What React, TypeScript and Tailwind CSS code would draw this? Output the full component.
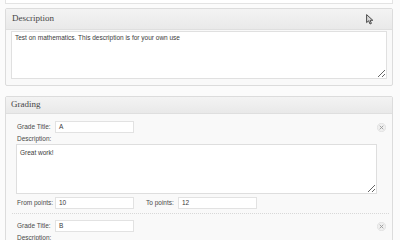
import React from "react";

const sans = { fontFamily: '"Liberation Sans", Arial, sans-serif' };
const serif = { fontFamily: '"Liberation Serif", "Times New Roman", serif' };

function XIcon() {
  return (
    <svg width="9" height="9" viewBox="0 0 9 9" className="block">
      <circle cx="4.5" cy="4.5" r="4.2" fill="#efefef" stroke="#dadada" strokeWidth="0.6" />
      <path d="M3 3 L6 6 M6 3 L3 6" stroke="#9a9a9a" strokeWidth="0.9" strokeLinecap="round" />
    </svg>
  );
}

function Cursor() {
  return (
    <svg width="8" height="11" viewBox="0 0 8 11" className="block">
      <path d="M0.6 0.6 L0.6 8.6 L2.6 6.8 L4 10 L5.4 9.4 L4.1 6.3 L6.8 6.3 Z" fill="#d8d8d8" stroke="#3a3a3a" strokeWidth="0.9" strokeLinejoin="round" />
    </svg>
  );
}

function Field({ label, value, labelW }: { label: string; value: string; labelW: string }) {
  return (
    <div className="flex items-center">
      <div className={`${labelW} text-[6.5px] text-[#4a4a4a]`}>{label}</div>
      <div className="w-[79px] h-[12px] border border-[#e2e2e2] bg-white flex items-center pl-[3px] text-[6.5px] text-[#3a3a3a]">
        {value}
      </div>
    </div>
  );
}

function GradeItem({ title, desc, from, to, last }: { title: string; desc: string; from?: string; to?: string; last?: boolean }) {
  return (
    <div className="relative">
      <div className="absolute right-[0px] top-[2px]">
        <XIcon />
      </div>
      <Field label="Grade Title:" value={title} labelW="w-[38px]" />
      <div className="text-[6.5px] text-[#4a4a4a] mt-[2px] leading-[8px]">Description:</div>
      {!last && (
        <>
          <textarea
            readOnly
            defaultValue={desc}
            className="mt-[1px] -ml-px block w-[361px] h-[50px] border border-[#dedede] bg-white px-[3px] py-[4px] text-[6.5px] text-[#3a3a3a] leading-[8px] outline-none"
            style={sans}
          />
          <div className="flex items-center mt-[3px]">
            <Field label="From points:" value={from || ""} labelW="w-[38px]" />
            <div className="ml-[12px]">
              <Field label="To points:" value={to || ""} labelW="w-[32px]" />
            </div>
          </div>
          <div className="mt-[4px] mb-[6px] -ml-[5px] mr-[-3px] border-b border-dotted border-[#d8d8d8]" />
        </>
      )}
    </div>
  );
}

export default function App() {
  return (
    <div className="w-[400px] h-[240px] overflow-hidden bg-[#fbfbfb] pl-[5px] pr-[7px]" style={sans}>
      <div className="h-[4px] border-x border-b border-[#e3e3e3] bg-white" />
      <div className="mt-[4px] border border-[#dcdcdc] bg-[#f9f9f9] rounded-[2px]">
        <div className="h-[21px] flex items-center justify-between pl-[6px] pr-[18px] bg-gradient-to-b from-[#f3f3f3] to-[#e9e9e9] border-b border-[#dfdfdf]">
          <span className="text-[9px] text-[#464646]" style={serif}>Description</span>
          <Cursor />
        </div>
        <div className="px-[5px] pt-[1px] pb-[6px]">
          <textarea
            readOnly
            defaultValue="Test on mathematics. This description is for your own use"
            className="block w-full h-[48px] border border-[#e0e0e0] bg-white px-[3px] py-[2px] text-[6.5px] text-[#3a3a3a] leading-[8px] outline-none"
            style={sans}
          />
        </div>
      </div>
      <div className="mt-[10px] border border-[#dcdcdc] bg-[#f9f9f9] rounded-[2px]">
        <div className="h-[17px] flex items-center pl-[5px] bg-gradient-to-b from-[#f3f3f3] to-[#e9e9e9] border-b border-[#dfdfdf]">
          <span className="text-[9px] text-[#464646]" style={serif}>Grading</span>
        </div>
        <div className="pl-[11px] pr-[6px] pt-[7px]">
          <GradeItem title="A" desc="Great work!" from="10" to="12" />
          <GradeItem title="B" desc="" last />
        </div>
      </div>
    </div>
  );
}
